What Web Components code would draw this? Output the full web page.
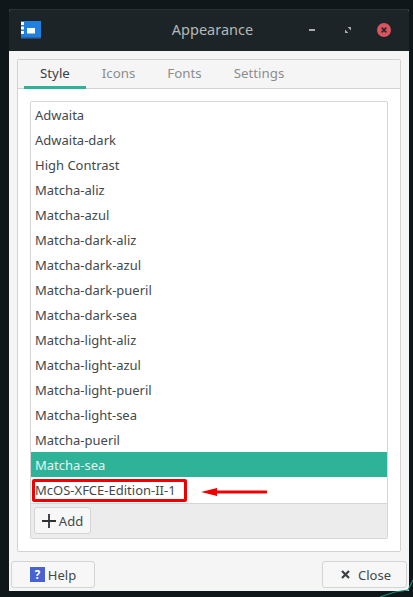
<!DOCTYPE html>
<html><head><meta charset="utf-8"><title>Appearance</title>
<style>
html,body{margin:0;height:597px;overflow:hidden;background:#10171b}
body{padding:9px 4px 6px 9px;box-sizing:border-box;font:13px "Noto Sans",sans-serif;color:#42494c;position:relative}
.deco{position:absolute;left:375px;top:575px;width:38px;height:22px;pointer-events:none}
</style></head><body>
<svg class="deco" viewBox="0 0 38 22"><path d="M5 22L20 17 33 15 38 5" fill="none" stroke="#1d8a76" stroke-width="1.2"/></svg>
<app-window title-text="Appearance">
  <tab-book>
    <theme-list>
      <theme-row>Adwaita</theme-row><theme-row>Adwaita-dark</theme-row><theme-row>High Contrast</theme-row>
      <theme-row>Matcha-aliz</theme-row><theme-row>Matcha-azul</theme-row><theme-row>Matcha-dark-aliz</theme-row>
      <theme-row>Matcha-dark-azul</theme-row><theme-row>Matcha-dark-pueril</theme-row><theme-row>Matcha-dark-sea</theme-row>
      <theme-row>Matcha-light-aliz</theme-row><theme-row>Matcha-light-azul</theme-row><theme-row>Matcha-light-pueril</theme-row>
      <theme-row>Matcha-light-sea</theme-row><theme-row>Matcha-pueril</theme-row><theme-row selected>Matcha-sea</theme-row>
      <theme-row marked>McOS-XFCE-Edition-II-1</theme-row>
      <ui-button slot="tools" style="width:57px"><svg width="14" height="14" viewBox="0 0 14 14"><path d="M7 0v14M0 7h14" stroke="#2c3336" stroke-width="1.8" fill="none"/></svg>Add</ui-button>
    </theme-list>
  </tab-book>
  <ui-button slot="actions" style="width:84px"><svg width="15" height="15" viewBox="0 0 15 15"><rect width="15" height="15" fill="#4a62d0"/><text x="7.5" y="12" font-size="11.5" font-weight="700" text-anchor="middle" fill="#fff" font-family="Noto Sans">?</text></svg>Help</ui-button>
  <ui-button slot="actions" style="width:85px;padding-left:3px"><svg width="9" height="9" viewBox="0 0 9 9" style="margin-right:5px"><path d="M1 1l7 7M8 1l-7 7" stroke="#3a4144" stroke-width="2.2" fill="none"/></svg>Close</ui-button>
</app-window>
<script>
function def(name,html,init){customElements.define(name,class extends HTMLElement{constructor(){super();this.attachShadow({mode:'open'}).innerHTML=html;}connectedCallback(){init&&init.call(this)}})}
def('app-window',`<style>
:host{display:flex;flex-direction:column;width:400px;height:582px;background:#f5f5f5;border-radius:3px 3px 0 0;overflow:hidden}
.bar{height:42px;flex:none;background:#1c2427;display:grid;grid-template-columns:1fr auto 1fr;align-items:center;padding:0 18px 0 12px;color:#b4b8b9;font-size:14.5px;box-shadow:inset 0 1px 0 #2a3134;box-sizing:border-box}
.ctl{display:flex;justify-content:flex-end;align-items:center}
.ctl span{display:flex;justify-content:center;align-items:center}
.title{margin:-2px 0 0 13px}
.body{flex:1;display:flex;flex-direction:column;padding:8px 8px 3px 8px;min-height:0}
.acts{display:flex;justify-content:space-between;padding:9px 1px 0 2px;margin:0 -7px 0 -8px;height:27px}
svg{display:block}
</style>
<div class="bar">
<svg width="20" height="18" viewBox="0 0 20 18"><rect width="20" height="18" fill="#1f80e0"/><rect y="16.5" width="20" height="1.5" fill="#2a4a72"/><rect x="0" y="1" width="3" height="3" fill="#fff"/><rect x="0" y="5.5" width="3" height="3" fill="#fff"/><rect x="0" y="10" width="3" height="3" fill="#fff"/><rect x="6" y="7" width="8" height="5.5" fill="#fff"/></svg>
<span class="title"></span>
<div class="ctl">
<span><svg width="6" height="2" viewBox="0 0 6 2"><rect width="6" height="2" fill="#a9adae"/></svg></span>
<span style="margin-left:30px"><svg width="6" height="6" viewBox="0 0 7 7"><path d="M7 0v4L3 0zM0 7V3l4 4z" fill="#a9adae"/></svg></span>
<span style="margin-left:26px"><svg width="14" height="14" viewBox="0 0 14 14"><circle cx="7" cy="7" r="7" fill="#d9545e"/><path d="M4.7 4.7l4.6 4.6M9.3 4.7l-4.6 4.6" stroke="#2a2a2c" stroke-width="1.7"/></svg></span>
</div></div>
<div class="body"><slot></slot><div class="acts"><slot name="actions"></slot></div></div>`,function(){this.shadowRoot.querySelector('.title').textContent=this.getAttribute('title-text')});
def('tab-book',`<style>
:host{display:flex;flex-direction:column;flex:1;min-height:0;border:1px solid #d2d2d2;border-radius:2px;box-sizing:border-box;background:#fff}
.tabs{display:flex;height:28px;background:#f5f5f5;border-bottom:1px solid #d2d2d2;padding-left:6px;flex:none;font-size:13.3px}
.t{height:29px;box-sizing:border-box;line-height:26px;color:#8a8e90;padding:0 16px;white-space:nowrap}
.t.on{color:#3a4144;border-bottom:3px solid #2eb398}
.c{flex:1;padding:12px;min-height:0;display:flex}
</style><div class="tabs"><div class="t on">Style</div><div class="t">Icons</div><div class="t">Fonts</div><div class="t">Settings</div></div><div class="c"><slot></slot></div>`);
def('theme-list',`<style>
:host{display:flex;flex-direction:column;flex:1;border:1px solid #d6d6d6;border-radius:2px;background:#fff;box-sizing:border-box;position:relative}
.l{flex:1;min-height:0;overflow:hidden}
.b{height:35px;flex:none;background:#ececec;border-top:1px solid #d6d6d6;box-sizing:border-box;padding:3px 3px;display:flex}
</style><div class="l"><slot></slot></div><div class="b"><slot name="tools"></slot></div>`);
def('theme-row',`<style>
:host{display:block;height:25px;line-height:27px;padding-left:4px;white-space:nowrap;position:relative;color:#42494c}
:host([selected]){background:#2eb398;color:#e6f5f0}
.box,.arrow{display:none;position:absolute}
:host([marked]) .box{display:block;left:1px;top:2px;width:155px;height:23px;border:3px solid #ee0000;box-sizing:border-box;border-radius:2px}
:host([marked]) .arrow{display:block;left:170px;top:7px}
</style><slot></slot><div class="box"></div><svg class="arrow" width="66" height="16" viewBox="0 0 66 16"><path d="M0 8L16 4V6.5H65a1.5 1.5 0 0 1 0 3H16V12z" fill="#ee0000"/></svg>`);
def('ui-button',`<style>
:host{display:flex;align-items:center;justify-content:center;gap:3px;height:27px;box-sizing:border-box;border:1px solid #d4d4d4;border-radius:3px;background:#f7f7f7;color:#42494c;white-space:nowrap;font-size:13px}
</style><slot></slot>`);
</script>
</body></html>
